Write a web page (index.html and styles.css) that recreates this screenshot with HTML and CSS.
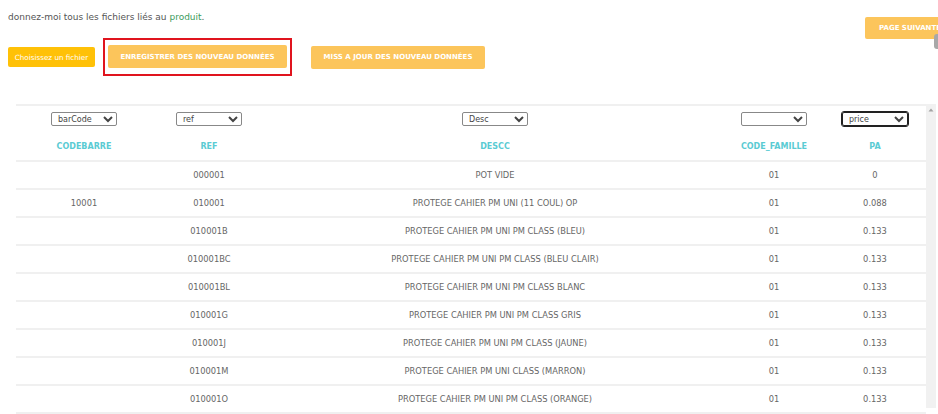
FILE: index.html
```html
<!DOCTYPE html>
<html lang="fr">
<head>
<meta charset="utf-8">
<title>Produits</title>
<link rel="stylesheet" href="styles.css">
</head>
<body>
<div class="page">
  <div class="top">
    <div class="left">
      <p class="intro">donnez-moi tous les fichiers liés au <span class="green">produit</span>.</p>
      <div class="toolbar">
        <button class="btn btn-file">Choisissez un fichier</button>
        <div class="highlight">
          <button class="btn btn-soft">ENREGISTRER DES NOUVEAU DONNÉES</button>
        </div>
        <button class="btn btn-soft btn-update">MISS A JOUR DES NOUVEAU DONNÉES</button>
      </div>
    </div>
    <button class="btn btn-soft btn-next">PAGE SUIVANTE</button>
  </div>

  <div class="tablebox">
    <table class="grid">
      <colgroup>
        <col class="c1"><col class="c2"><col class="c3"><col class="c4"><col class="c5">
      </colgroup>
      <thead>
        <tr class="filters">
          <th><select><option>barCode</option></select></th>
          <th><select><option>ref</option></select></th>
          <th><select><option>Desc</option></select></th>
          <th><select><option></option></select></th>
          <th><select class="focused"><option>price</option></select></th>
        </tr>
        <tr class="labels">
          <th>CODEBARRE</th><th>REF</th><th>DESCC</th><th>CODE_FAMILLE</th><th>PA</th>
        </tr>
      </thead>
      <tbody>
        <tr><td></td><td>000001</td><td>POT VIDE</td><td>01</td><td>0</td></tr>
        <tr><td>10001</td><td>010001</td><td>PROTEGE CAHIER PM UNI (11 COUL) OP</td><td>01</td><td>0.088</td></tr>
        <tr><td></td><td>010001B</td><td>PROTEGE CAHIER PM UNI PM CLASS (BLEU)</td><td>01</td><td>0.133</td></tr>
        <tr><td></td><td>010001BC</td><td>PROTEGE CAHIER PM UNI PM CLASS (BLEU CLAIR)</td><td>01</td><td>0.133</td></tr>
        <tr><td></td><td>010001BL</td><td>PROTEGE CAHIER PM UNI PM CLASS BLANC</td><td>01</td><td>0.133</td></tr>
        <tr><td></td><td>010001G</td><td>PROTEGE CAHIER PM UNI PM CLASS GRIS</td><td>01</td><td>0.133</td></tr>
        <tr><td></td><td>010001J</td><td>PROTEGE CAHIER PM UNI PM CLASS (JAUNE)</td><td>01</td><td>0.133</td></tr>
        <tr><td></td><td>010001M</td><td>PROTEGE CAHIER PM UNI CLASS (MARRON)</td><td>01</td><td>0.133</td></tr>
        <tr><td></td><td>010001O</td><td>PROTEGE CAHIER PM UNI PM CLASS (ORANGE)</td><td>01</td><td>0.133</td></tr>
      </tbody>
    </table>
    <div class="scrollbar">
      <svg class="arrow" width="6" height="4" viewBox="0 0 6 4"><path d="M3 0.5 L5.5 3.5 L0.5 3.5 Z" fill="#a3a3a3"/></svg>
    </div>
  </div>
  <div class="page-thumb"></div>
</div>
</body>
</html>
```
FILE: styles.css
```css
html, body {
  margin: 0;
  padding: 0;
  background: #fff;
  overflow: hidden;
}
body {
  font-family: "DejaVu Sans", "Liberation Sans", sans-serif;
  color: #666;
  width: 938px;
  height: 414px;
}
.page {
  position: relative;
  width: 938px;
  height: 414px;
  overflow: hidden;
}
.top {
  display: flex;
  align-items: flex-start;
}
.left {
  display: flex;
  flex-direction: column;
  padding-left: 8px;
}
.intro {
  margin: 11px 0 0 0;
  font-size: 9px;
  line-height: 12px;
  color: #555;
}
.green { color: #3a9b5c; }
.toolbar {
  display: flex;
  align-items: center;
  margin-top: 15px;
}
.btn {
  border: none;
  color: #fff;
  font-family: inherit;
  border-radius: 2px;
  padding: 0;
  cursor: pointer;
}
.btn-file {
  background: #ffc107;
  font-size: 7.2px;
  width: 87px;
  height: 20px;
}
.highlight {
  border: 2px solid #e0141e;
  padding: 5px 3px 6px 3px;
  margin-left: 8px;
  display: flex;
}
.btn-soft {
  background: #fcc55b;
  font-weight: bold;
  font-size: 7px;
  width: 179px;
  height: 23px;
}
.btn-update {
  margin-left: 19px;
  width: 174px;
}
.btn-next {
  margin-left: auto;
  margin-top: 17px;
  margin-right: -27px;
  width: 100px;
  height: 22px;
  text-align: left;
  padding-left: 14px;
}
.page-thumb {
  position: absolute;
  right: -4px;
  top: 34px;
  width: 8px;
  height: 15px;
  border-radius: 3px;
  background: #a8a8a8;
}
.tablebox {
  display: flex;
  margin: 28px 0 0 16px;
  width: 920px;
}
.grid {
  width: 910px;
  border-collapse: separate;
  border-spacing: 0;
  table-layout: fixed;
  border-top: 2px solid #f0f0f0;
}
.c1 { width: 136px; }
.c2 { width: 114px; }
.c3 { width: 458px; }
.c4 { width: 100px; }
.c5 { width: 102px; }
.filters th {
  box-sizing: border-box;
  height: 27px;
  padding: 6px 0 0 0;
  vertical-align: top;
  line-height: 0;
}
select {
  width: 66px;
  height: 14px;
  font-size: 8px;
  font-family: inherit;
  color: #444;
  border: 1px solid #888;
  border-radius: 2px;
  background: #fff;
  padding: 0 0 0 2px;
  vertical-align: top;
}
select.focused {
  border: 1px solid #222;
  outline: 1px solid #222;
}
.labels th {
  box-sizing: border-box;
  height: 29px;
  padding: 0;
  font-size: 8px;
  font-weight: bold;
  color: #5acbd3;
  border-bottom: 2px solid #f0f0f0;
}
tbody td {
  box-sizing: border-box;
  height: 28px;
  padding: 0;
  text-align: center;
  font-size: 8.3px;
  color: #666;
  border-bottom: 2px solid #f0f0f0;
}
.scrollbar {
  width: 10px;
  height: 304px;
  background: #f1f1f1;
  display: flex;
  justify-content: center;
  padding-top: 4px;
  box-sizing: border-box;
}
.arrow { display: block; }
```
